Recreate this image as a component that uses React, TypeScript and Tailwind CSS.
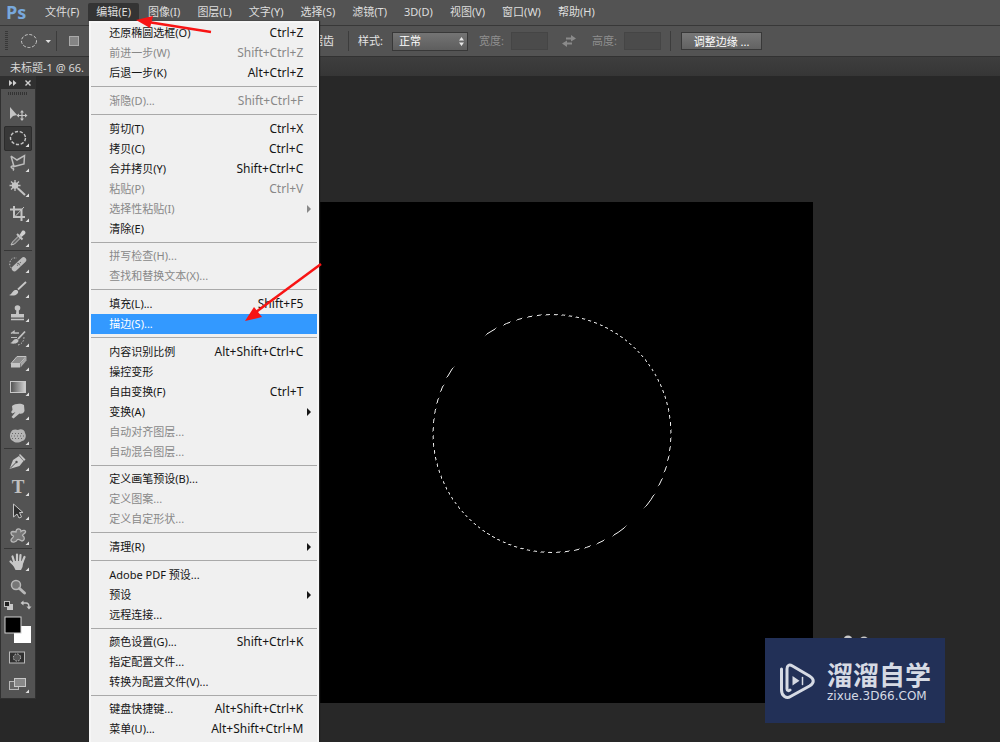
import type { ReactNode } from "react";
import clsx from "clsx";

type Item = {
  label: string;
  keys?: string;
  disabled?: boolean;
  submenu?: boolean;
  active?: boolean;
};

const menus = [
  "文件(F)",
  "编辑(E)",
  "图像(I)",
  "图层(L)",
  "文字(Y)",
  "选择(S)",
  "滤镜(T)",
  "3D(D)",
  "视图(V)",
  "窗口(W)",
  "帮助(H)",
];

const editMenu: Item[][] = [
  [
    { label: "还原椭圆选框(O)", keys: "Ctrl+Z" },
    { label: "前进一步(W)", keys: "Shift+Ctrl+Z", disabled: true },
    { label: "后退一步(K)", keys: "Alt+Ctrl+Z" },
  ],
  [{ label: "渐隐(D)...", keys: "Shift+Ctrl+F", disabled: true }],
  [
    { label: "剪切(T)", keys: "Ctrl+X" },
    { label: "拷贝(C)", keys: "Ctrl+C" },
    { label: "合并拷贝(Y)", keys: "Shift+Ctrl+C" },
    { label: "粘贴(P)", keys: "Ctrl+V", disabled: true },
    { label: "选择性粘贴(I)", disabled: true, submenu: true },
    { label: "清除(E)" },
  ],
  [
    { label: "拼写检查(H)...", disabled: true },
    { label: "查找和替换文本(X)...", disabled: true },
  ],
  [
    { label: "填充(L)...", keys: "Shift+F5" },
    { label: "描边(S)...", active: true },
  ],
  [
    { label: "内容识别比例", keys: "Alt+Shift+Ctrl+C" },
    { label: "操控变形" },
    { label: "自由变换(F)", keys: "Ctrl+T" },
    { label: "变换(A)", submenu: true },
    { label: "自动对齐图层...", disabled: true },
    { label: "自动混合图层...", disabled: true },
  ],
  [
    { label: "定义画笔预设(B)..." },
    { label: "定义图案...", disabled: true },
    { label: "定义自定形状...", disabled: true },
  ],
  [{ label: "清理(R)", submenu: true }],
  [
    { label: "Adobe PDF 预设..." },
    { label: "预设", submenu: true },
    { label: "远程连接..." },
  ],
  [
    { label: "颜色设置(G)...", keys: "Shift+Ctrl+K" },
    { label: "指定配置文件..." },
    { label: "转换为配置文件(V)..." },
  ],
  [
    { label: "键盘快捷键...", keys: "Alt+Shift+Ctrl+K" },
    { label: "菜单(U)...", keys: "Alt+Shift+Ctrl+M" },
  ],
];

type Tool = { name: string; icon: ReactNode; active?: boolean; single?: boolean };

const selectTools: Tool[] = [
  {
    name: "移动工具",
    single: true,
    icon: (
      <>
        <path d="M6 6v12l3-3 4-1z" fill="#c4c4c4" />
        <path d="M18 10v9M13.500 14.500h9" stroke="#c4c4c4" strokeWidth="1.200" />
        <path d="M18 9l2 2.500h-4zM18 20l2-2.500h-4zM12.500 14.500l2.500-2v4zM23.500 14.500l-2.500-2v4z" fill="#c4c4c4" />
      </>
    ),
  },
  {
    name: "椭圆选框工具",
    active: true,
    icon: (
      <ellipse cx="14" cy="12" rx="7.500" ry="6.500" fill="none" stroke="#c4c4c4" strokeWidth="1.400" strokeDasharray="3.200 1.700" />
    ),
  },
  {
    name: "多边形套索工具",
    icon: (
      <path d="M7 5l6 4 7.500-4.500L20 13l-10 2.500L7 5M10 15.500c-2-1.500-4 .5-2 1.500 2 .5 2 1 1 2.500" fill="none" stroke="#bdbdbd" strokeWidth="1.500" />
    ),
  },
  {
    name: "魔棒工具",
    icon: (
      <>
        <path d="M11 4v11M5.500 9.500h11M7 5.500l8 8M15 5.500l-8 8" stroke="#c4c4c4" strokeWidth="1.300" />
        <circle cx="11" cy="9.500" r="3.200" fill="#c4c4c4" />
        <path d="M14 12.500l7 6.500" stroke="#c4c4c4" strokeWidth="2" />
      </>
    ),
  },
  {
    name: "裁剪工具",
    icon: (
      <>
        <path d="M10 5v11h11M6 8.500h11.500V20" fill="none" stroke="#c4c4c4" strokeWidth="2" />
        <path d="M11 15.500L20 6" stroke="#c4c4c4" />
      </>
    ),
  },
  {
    name: "吸管工具",
    icon: (
      <>
        <path d="M7 19l1.500-3 6-6 2 2-6 6z" fill="#6b6b6b" stroke="#c4c4c4" />
        <path d="M13 8l5.500 5.500" stroke="#c4c4c4" strokeWidth="2" />
        <path d="M15.500 9l2.500-4c2-1.500 4.500 1 3 3l-3.500 3z" fill="#d0d0d0" />
      </>
    ),
  },
];

const paintTools: Tool[] = [
  {
    name: "污点修复画笔工具",
    icon: (
      <>
        <path d="M10 17c-5 0-6-8-1-11h4" fill="none" stroke="#bdbdbd" strokeDasharray="1.500 1.500" />
        <path d="M10.500 16.500l9-8.500" stroke="#bdbdbd" strokeWidth="5.500" strokeLinecap="round" />
        <path d="M13 13.500l4-3.500M13.500 11l3 3" stroke="#666" strokeWidth="1.200" strokeDasharray="1 1" />
      </>
    ),
  },
  {
    name: "画笔工具",
    icon: (
      <>
        <path d="M14 12.500L22 5" stroke="#c8c8c8" strokeWidth="1.800" />
        <path d="M5 18c3-.5 3-4 6-5 3-.5 4 2 2.500 3.500-2 2.500-6 2.500-8.500 1.500z" fill="#c8c8c8" />
      </>
    ),
  },
  {
    name: "仿制图章工具",
    icon: (
      <>
        <circle cx="13.500" cy="7" r="2.800" fill="#c4c4c4" />
        <path d="M12.500 8h2.200l.3 5h5v3.500H7V13h5z" fill="#c4c4c4" />
        <path d="M7 18.500h13" stroke="#c4c4c4" strokeWidth="1.500" />
      </>
    ),
  },
  {
    name: "历史记录画笔工具",
    icon: (
      <>
        <path d="M7 7.500l3-2v1.500h5" fill="#bdbdbd" stroke="#bdbdbd" strokeWidth="1.500" />
        <path d="M14 13l7-7.500" stroke="#c4c4c4" strokeWidth="1.800" />
        <path d="M6 17c3-.5 3-4 6-4 3 0 3 2.500 1.500 3.500-2 1.500-5 1.500-7.500.5z" fill="#c4c4c4" />
        <path d="M14 19c4-1 6-4 6-8" fill="none" stroke="#bdbdbd" strokeDasharray="1.500 1.500" />
        <path d="M7 11.500h6" stroke="#bdbdbd" />
      </>
    ),
  },
  {
    name: "橡皮擦工具",
    icon: (
      <>
        <path d="M13 6.500h9l-6 7H7z" fill="#8c8c8c" stroke="#c4c4c4" />
        <path d="M7 13.500h9v4H7z" fill="#c4c4c4" />
        <path d="M16.500 13.500l6-7v4l-6 7z" fill="#a8a8a8" />
      </>
    ),
  },
  {
    name: "渐变工具",
    icon: (
      <>
        <defs>
          <linearGradient id="toolGradient">
            <stop stopColor="#505050" />
            <stop offset="1" stopColor="#d2d2d2" />
          </linearGradient>
        </defs>
        <rect x="6.500" y="6.500" width="15" height="11" fill="url(#toolGradient)" stroke="#c8c8c8" />
      </>
    ),
  },
  {
    name: "涂抹工具",
    icon: (
      <path d="M8 7c3-2.500 9-3 12-1l.5 6c-1 3-4 3-5 2.500l-6 5-2-1.500 4-5-3 1.500c-2-1-1-2.500 0-3.500z" fill="#c4c4c4" />
    ),
  },
  {
    name: "海绵工具",
    icon: (
      <>
        <path d="M7 8c1-3 5-3 7-2 3-2 7 0 7 3 2 3 0 8-3 8-3 2-7 2-9 0-3-1-4-6-2-9z" fill="#b5b5b5" />
        <path d="M8 9.500h12M7 12h14M8 14.500h12" stroke="#686868" strokeDasharray="1 2" />
      </>
    ),
  },
];

const drawTools: Tool[] = [
  {
    name: "钢笔工具",
    icon: (
      <>
        <path d="M5.500 19l3.500-9 6-4 4.500 5-4 5z" fill="#c8c8c8" />
        <path d="M16 4l5.500 5.500-1.500 1.500-5-6z" fill="#c8c8c8" />
        <path d="M6 18.500l6-6" stroke="#505050" />
        <circle cx="12.500" cy="12" r="1.200" fill="#505050" />
      </>
    ),
  },
  {
    name: "横排文字工具",
    icon: (
      <text x="14" y="18" textAnchor="middle" fontFamily="Liberation Serif, serif" fontSize="19" fontWeight="bold" fill="#c0c0c0">
        T
      </text>
    ),
  },
  {
    name: "路径选择工具",
    icon: <path d="M9.500 5v13l3.500-3 2 4 2.500-1-2-4.500H19z" fill="#303030" stroke="#c4c4c4" />,
  },
  {
    name: "自定形状工具",
    icon: (
      <path d="M12 8c0-4 5-4 5-.5 2-1.500 5-1.500 4.500.5-.5 2-3 2-3 3.500 3 2 2 5-.5 5.500-2 0-2.500-2.500-4.500-1.500-1.500 3-6 3.500-6.500 1s3-2.500 2.500-4.500c-3-1-3.500-4.500-.5-4.500z" fill="#777" stroke="#b8b8b8" strokeWidth="1.300" />
    ),
  },
];

const viewTools: Tool[] = [
  {
    name: "抓手工具",
    icon: (
      <>
        <path d="M10.500 13L8.500 6.500M13 12V4.500M16 12l.5-7M18 13l2.500-6M10.500 15.500L6.500 11.500" stroke="#c8c8c8" strokeWidth="2.200" strokeLinecap="round" />
        <path d="M9.500 11h10l-1 6-1.500 3h-5.500l-2.500-5z" fill="#c8c8c8" />
      </>
    ),
  },
  {
    name: "缩放工具",
    single: true,
    icon: (
      <>
        <circle cx="12" cy="10" r="4.500" fill="#777" stroke="#b8b8b8" strokeWidth="1.500" />
        <path d="M15.500 13.500l5 4.500" stroke="#b8b8b8" strokeWidth="3" strokeLinecap="round" />
      </>
    ),
  },
];

function ToolGroup({ tools, className }: { tools: Tool[]; className: string }) {
  return (
    <div className={clsx("flex flex-col", className)}>
      {tools.map((tool) => (
        <button
          key={tool.name}
          aria-label={tool.name}
          className={clsx(
            "flex flex-1 items-center rounded-xs",
            tool.active && "bg-[#383838] outline outline-[#2c2c2c] -outline-offset-1",
          )}
        >
          <svg width="28" height="24" viewBox="0 0 28 24">
            {tool.icon}
            {!tool.single && <path d="M25 17.500v3.500h-3.500z" fill="#e0e0e0" />}
          </svg>
        </button>
      ))}
    </div>
  );
}

function Divider() {
  return <div className="h-px bg-[#363636] mb-px" />;
}

function Toolbox() {
  return (
    <aside className="w-9 shrink-0 self-start border border-[#303030] bg-[#535353]">
      <div className="flex h-3 items-center justify-between bg-[#303030] pl-2 pr-1">
        <svg width="8" height="6" viewBox="0 0 8 6" fill="#d0d0d0">
          <path d="M0 0l3.500 3L0 6zM4 0l3.500 3L4 6z" />
        </svg>
        <svg width="6" height="6" viewBox="0 0 6 6" stroke="#d0d0d0" strokeWidth="1.400">
          <path d="M.5.5l5 5M5.500.5l-5 5" />
        </svg>
      </div>
      <div className="px-[3px]">
        <div className="mx-1 mt-[3px] h-[3px] bg-[repeating-linear-gradient(90deg,#333_0_1px,#535353_1px_2px)]" />
        <ToolGroup tools={selectTools} className="mt-[6px] h-[149px]" />
        <Divider />
        <ToolGroup tools={paintTools} className="h-[196px]" />
        <Divider />
        <ToolGroup tools={drawTools} className="h-[98px]" />
        <Divider />
        <ToolGroup tools={viewTools} className="h-[49px]" />
        <svg width="28" height="46" viewBox="0 0 28 46" className="mt-px">
          <rect x="3" y="4" width="6" height="6" fill="#c8c8c8" />
          <rect x=".5" y="1.500" width="5" height="5" fill="#222" stroke="#c0c0c0" />
          <path d="M19 3h3q3 0 3 4" fill="none" stroke="#c8c8c8" strokeWidth="1.300" />
          <path d="M16.500 3L19.500.5v5zM25 9.500L22.500 6.500h5z" fill="#c8c8c8" />
          <rect x="10" y="26" width="17" height="17" fill="#fff" />
          <rect x="1" y="17" width="16" height="16" fill="#000" stroke="#d0d0d0" />
        </svg>
        <button aria-label="快速蒙版" className="flex h-6 w-full items-center">
          <svg width="28" height="20" viewBox="0 0 28 20">
            <rect x="5.500" y="4" width="15" height="11" fill="#303030" stroke="#b8b8b8" />
            <circle cx="13" cy="9.500" r="3.600" fill="#555" stroke="#c8c8c8" strokeDasharray="1.500 1.300" />
          </svg>
        </button>
        <button aria-label="屏幕模式" className="flex h-7 w-full items-center">
          <svg width="28" height="24" viewBox="0 0 28 24">
            <rect x="5.500" y="9.500" width="9" height="8" fill="#666" stroke="#b8b8b8" />
            <rect x="10.500" y="6.500" width="11" height="8" fill="#888" stroke="#c8c8c8" />
            <path d="M25 17.500v3.500h-3.500z" fill="#e0e0e0" />
          </svg>
        </button>
      </div>
    </aside>
  );
}

function EditMenu() {
  return (
    <div
      role="menu"
      className="absolute left-px top-full z-10 w-[230px] border-2 border-[#f6f6f6] bg-[#f0f0f0] pb-3 shadow-[1px_0_1px_#222]"
    >
      {editMenu.map((group, i) => (
        <div
          key={i}
          className={clsx(
            i > 0 && "mt-[3px] border-t border-[#a9a9a9]",
            i > 0 && (i === 3 || i === 6 || i > 8 ? "pt-[3px]" : "pt-1"),
          )}
        >
          {group.map((item) => (
            <button
              key={item.label}
              role="menuitem"
              disabled={item.disabled}
              className={clsx(
                "flex h-5 w-full items-center justify-between pl-[18px] pr-[14px]",
                item.disabled ? "text-[#888]" : item.active ? "bg-[#3399ff] text-white" : "text-[#151515]",
              )}
            >
              <span>{item.label}</span>
              {item.keys && <span className="text-xs">{item.keys}</span>}
              {item.submenu && (
                <svg width="4" height="8" viewBox="0 0 4 8" className="-mr-2" fill="currentColor">
                  <path d="M0 0l4 4-4 4z" />
                </svg>
              )}
            </button>
          ))}
        </div>
      ))}
    </div>
  );
}

function MenuBar() {
  return (
    <nav className="flex h-[25px] items-start gap-px pt-[3px] text-[#dedede]">
      <div className="w-9 pl-1.5 font-['Open_Sans'] text-[18px] font-bold leading-[18px] text-[#78a8dc]">Ps</div>
      {menus.map((name, i) => (
        <div key={name} className="relative">
          <button
            className={clsx(
              "h-[18px] whitespace-nowrap rounded-t-xs px-2 leading-[18px]",
              i === 1 && "bg-[#343434]",
            )}
          >
            {name}
          </button>
          {i === 1 && <EditMenu />}
        </div>
      ))}
    </nav>
  );
}

function Rule() {
  return <div className="h-5 w-px bg-[#3c3c3c]" />;
}

function OptionsBar() {
  return (
    <div className="flex h-8 items-center border-y border-t-[#383838] border-b-[#323232] bg-[#535353] text-[#e4e4e4]">
      <div className="ml-[5px] h-5 w-[3px] bg-[repeating-linear-gradient(#383838_0_1px,#535353_1px_2px)]" />
      <svg width="32" height="16" viewBox="0 0 32 16" className="ml-3">
        <ellipse cx="9" cy="8" rx="7.500" ry="6.500" fill="none" stroke="#c8c8c8" strokeDasharray="3 1.700" />
        <path d="M25.500 7h5.500l-2.750 3z" fill="#e0e0e0" />
      </svg>
      <div className="ml-1 flex items-center">
        <Rule />
        <div className="ml-3 size-[10px] border border-[#aaa] bg-[#858585]" />
      </div>
      <label className="ml-[218px] flex items-center gap-1">
        <input type="checkbox" className="size-[11px]" defaultChecked />
        锯齿
      </label>
      <div className="ml-[14px] mr-[9px]">
        <Rule />
      </div>
      <label htmlFor="style" className="w-[34px]">
        样式:
      </label>
      <div className="relative">
        <select
          id="style"
          className="block h-[19px] w-[76px] appearance-none border border-[#383838] bg-linear-to-b from-[#747474] to-[#5e5e5e] pl-[6px] leading-[16px] text-white"
        >
          <option>正常</option>
        </select>
        <svg width="5" height="9" viewBox="0 0 5 9" className="pointer-events-none absolute right-1 top-[5px]" fill="#e8e8e8">
          <path d="M0 3.500L2.500 0 5 3.500zM0 5.500L2.500 9 5 5.500z" />
        </svg>
      </div>
      <label htmlFor="width" className="ml-[11px] w-8 text-[#8f8f8f]">
        宽度:
      </label>
      <input id="width" disabled className="h-[18px] w-[37px] border border-[#454545] bg-[#4b4b4b]" />
      <svg width="14" height="12" viewBox="0 0 14 12" className="ml-[14px]" fill="#8a8a8a">
        <path d="M4 2.500h5V0l5 3.500-5 3V4.500H4zM10 7.500H5V5.500L0 8.500 5 12V9.500h5z" />
      </svg>
      <label htmlFor="height" className="ml-4 w-8 text-[#8f8f8f]">
        高度:
      </label>
      <input id="height" disabled className="h-[18px] w-[37px] border border-[#454545] bg-[#4b4b4b]" />
      <div className="ml-[9px] mr-[10px]">
        <Rule />
      </div>
      <button className="h-[18px] w-[81px] border border-[#383838] bg-linear-to-b from-[#787878] to-[#626262] leading-[15px] text-white">
        调整边缘 ...
      </button>
    </div>
  );
}

// The selection outline is lit in diagonal bands, 4px on and 4px off.
function Document() {
  return (
    <div className="ml-[255px] mt-[126px] h-[501px] w-[522px] shrink-0 bg-black">
      <svg width="522" height="501" viewBox="291 202 522 501">
        <defs>
          <linearGradient id="ants" gradientUnits="userSpaceOnUse" x1="0" y1="0" x2="4" y2="4" spreadMethod="repeat">
            <stop offset=".5" stopColor="#000" />
            <stop offset=".5" stopColor="#f4f4f4" />
          </linearGradient>
        </defs>
        <circle cx="552" cy="433.500" r="119" fill="none" stroke="url(#ants)" />
      </svg>
    </div>
  );
}

function Watermark() {
  return (
    <div className="absolute left-[765px] top-[638px]">
      <svg width="30" height="6" viewBox="0 0 30 6" className="absolute -top-[3px] left-[77px]" fill="#c8c8c8">
        <circle cx="6" cy="5" r="4.500" />
        <circle cx="22" cy="6" r="4.500" />
      </svg>
      <div className="relative flex h-[85px] w-[180px] items-center bg-[#223057] pl-[14px] text-[#d6dae4]">
        <svg width="36" height="38" viewBox="0 0 36 38" fill="none" stroke="currentColor" strokeWidth="3" strokeLinecap="round">
          <path d="M2.500 7v21c0 6 5 9 9 6.500l19-10.500c5-3 5-7 0-10L13.500 4C10 2 8 3.500 8 7v20c0 2 2 2 3 1" />
          <path d="M13.500 14v9.500l7-4.750z" fill="currentColor" stroke="none" />
          <path d="M23.500 15.500v7" strokeWidth="1.500" />
        </svg>
        <div className="ml-3 whitespace-nowrap">
          <div className="text-[26px] font-bold leading-[30px]">溜溜自学</div>
          <div className="font-['DejaVu_Sans'] text-xs leading-[12px]">zixue.3D66.COM</div>
        </div>
      </div>
    </div>
  );
}

function Pointers() {
  return (
    <svg className="pointer-events-none absolute inset-0 z-20 size-full" stroke="#f81414" fill="#f81414">
      <path d="M211 32L148 22" strokeWidth="2.500" />
      <path d="M136 20l17-4-3 12z" stroke="none" />
      <path d="M321 264L256 312" strokeWidth="2.500" />
      <path d="M245 321l9-14 8 10z" stroke="none" />
    </svg>
  );
}

export default function App() {
  return (
    <div className="relative flex h-screen flex-col overflow-hidden bg-[#535353] font-['Noto_Sans','Noto_Sans_CJK_SC',sans-serif] text-[11px]">
      <MenuBar />
      <OptionsBar />
      <div className="flex h-[19px] bg-linear-to-b from-[#3e3e3e] to-[#363636]">
        <div className="w-[180px] bg-[#474747] pl-[10px] pt-0.5 leading-[18px] text-[#d8d8d8]">未标题-1 @ 66.</div>
      </div>
      <main className="flex flex-1 bg-[#282828]">
        <Toolbox />
        <Document />
      </main>
      <Watermark />
      <Pointers />
    </div>
  );
}
